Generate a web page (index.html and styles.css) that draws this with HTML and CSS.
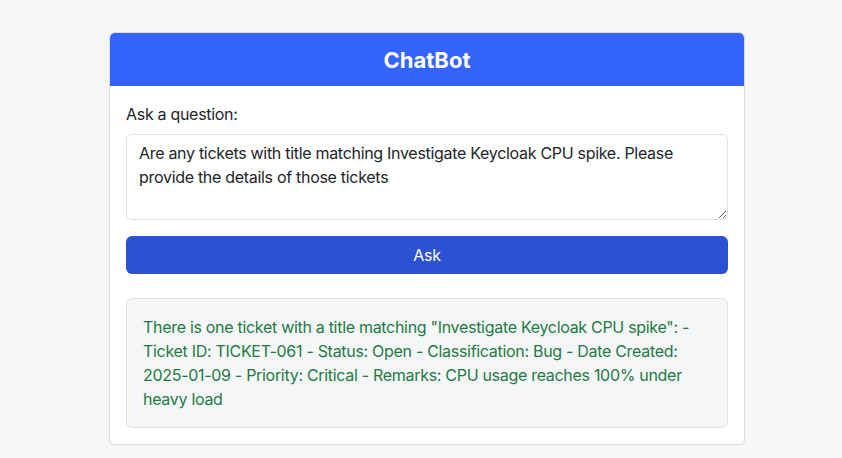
FILE: index.html
```html
<!DOCTYPE html>
<html lang="en">
<head>
<meta charset="utf-8">
<title>ChatBot</title>
<link rel="stylesheet" href="styles.css">
</head>
<body>
<main class="page">
  <section class="card">
    <header class="card-header">
      <h1 class="title">ChatBot</h1>
    </header>
    <div class="card-body">
      <label class="label" for="q">Ask a question:</label>
      <textarea id="q" class="question">Are any tickets with title matching Investigate Keycloak CPU spike. Please provide the details of those tickets</textarea>
      <button class="ask" type="button">Ask</button>
      <div class="answer">There is one ticket with a title matching "Investigate Keycloak CPU spike": - Ticket ID: TICKET-061 - Status: Open - Classification: Bug - Date Created: 2025-01-09 - Priority: Critical - Remarks: CPU usage reaches 100% under heavy load</div>
    </div>
  </section>
</main>
</body>
</html>
```
FILE: styles.css
```css
* { box-sizing: border-box; }
html, body { margin: 0; padding: 0; }
body {
  background: #f6f7f9;
  font-family: "Inter", "Liberation Sans", sans-serif;
  font-size: 16px;
  line-height: 24px;
  letter-spacing: -0.3px;
  color: #212529;
}
.page {
  padding: 32px 0 0 109px;
}
.card {
  width: 636px;
  background: #fff;
  border: 1px solid #d9dce0;
  border-radius: 6px;
  overflow: hidden;
  box-shadow: 0 1px 2px rgba(0,0,0,0.06);
}
.card-header {
  background: #3563fd;
  height: 53px;
  display: flex;
  align-items: center;
  justify-content: center;
}
.title {
  margin: 0;
  color: #fff;
  font-size: 22px;
  font-weight: 700;
  line-height: 26px;
  letter-spacing: 0;
}
.card-body {
  padding: 16px;
  display: flex;
  flex-direction: column;
}
.label {
  margin-bottom: 8px;
}
.question {
  height: 86px;
  border: 1px solid #dee2e6;
  border-radius: 6px;
  padding: 6px 12px;
  font: inherit;
  letter-spacing: inherit;
  color: #212529;
  resize: vertical;
}
.ask {
  margin-top: 16px;
  height: 38px;
  border: none;
  border-radius: 6px;
  background: #2c51d3;
  color: #fff;
  font: inherit;
  letter-spacing: inherit;
}
.answer {
  margin-top: 24px;
  padding: 16px;
  background: #f5f6f8;
  border: 1px solid #dee2e6;
  border-radius: 6px;
  color: #1e7a43;
  min-height: 130px;
}
```
